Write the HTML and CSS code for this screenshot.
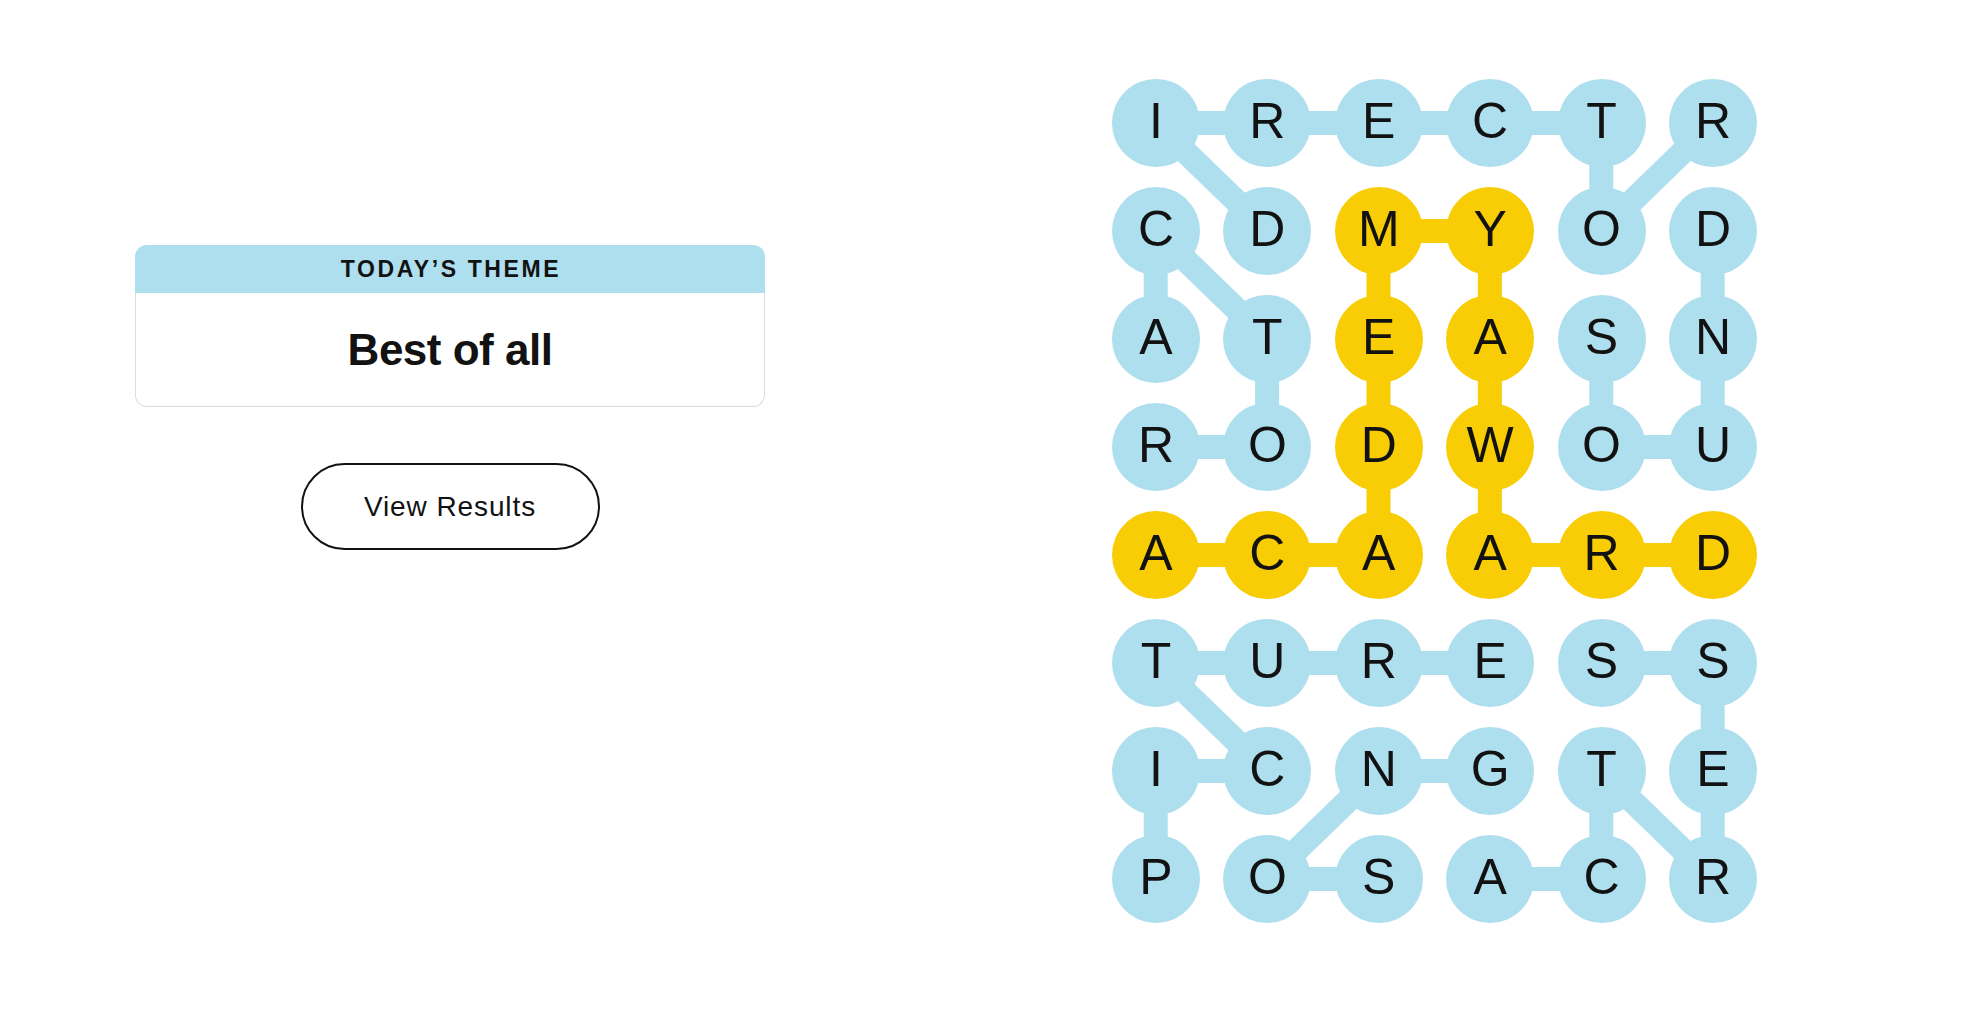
FILE: index.html
```html
<!DOCTYPE html>
<html lang="en">
<head>
<meta charset="utf-8">
<title>Strands</title>
<link rel="stylesheet" href="styles.css">
</head>
<body>
<main class="page">
  <section class="left">
    <div class="card">
      <div class="card-header">TODAY’S THEME</div>
      <div class="card-body">Best of all</div>
    </div>
    <button class="results-btn" type="button">View Results</button>
  </section>
  <section class="board">
    <svg class="links" viewBox="0 0 668.4 864" width="668.4" height="864" aria-hidden="true">
      <g class="blue">
        <line x1="55.7" y1="54" x2="167.1" y2="54"/>
        <line x1="167.1" y1="54" x2="278.5" y2="54"/>
        <line x1="278.5" y1="54" x2="389.9" y2="54"/>
        <line x1="389.9" y1="54" x2="501.3" y2="54"/>
        <line x1="55.7" y1="378" x2="167.1" y2="378"/>
        <line x1="501.3" y1="378" x2="612.7" y2="378"/>
        <line x1="55.7" y1="594" x2="167.1" y2="594"/>
        <line x1="167.1" y1="594" x2="278.5" y2="594"/>
        <line x1="278.5" y1="594" x2="389.9" y2="594"/>
        <line x1="501.3" y1="594" x2="612.7" y2="594"/>
        <line x1="55.7" y1="702" x2="167.1" y2="702"/>
        <line x1="278.5" y1="702" x2="389.9" y2="702"/>
        <line x1="167.1" y1="810" x2="278.5" y2="810"/>
        <line x1="389.9" y1="810" x2="501.3" y2="810"/>
        <line x1="55.7" y1="162" x2="55.7" y2="270"/>
        <line x1="167.1" y1="270" x2="167.1" y2="378"/>
        <line x1="501.3" y1="54" x2="501.3" y2="162"/>
        <line x1="501.3" y1="270" x2="501.3" y2="378"/>
        <line x1="612.7" y1="162" x2="612.7" y2="270"/>
        <line x1="612.7" y1="270" x2="612.7" y2="378"/>
        <line x1="55.7" y1="702" x2="55.7" y2="810"/>
        <line x1="612.7" y1="594" x2="612.7" y2="702"/>
        <line x1="612.7" y1="702" x2="612.7" y2="810"/>
        <line x1="501.3" y1="702" x2="501.3" y2="810"/>
        <line x1="55.7" y1="54" x2="167.1" y2="162"/>
        <line x1="55.7" y1="162" x2="167.1" y2="270"/>
        <line x1="501.3" y1="162" x2="612.7" y2="54"/>
        <line x1="55.7" y1="594" x2="167.1" y2="702"/>
        <line x1="278.5" y1="702" x2="167.1" y2="810"/>
        <line x1="501.3" y1="702" x2="612.7" y2="810"/>
      </g>
      <g class="yellow">
        <line x1="278.5" y1="162" x2="389.9" y2="162"/>
        <line x1="55.7" y1="486" x2="167.1" y2="486"/>
        <line x1="167.1" y1="486" x2="278.5" y2="486"/>
        <line x1="389.9" y1="486" x2="501.3" y2="486"/>
        <line x1="501.3" y1="486" x2="612.7" y2="486"/>
        <line x1="278.5" y1="162" x2="278.5" y2="270"/>
        <line x1="278.5" y1="270" x2="278.5" y2="378"/>
        <line x1="278.5" y1="378" x2="278.5" y2="486"/>
        <line x1="389.9" y1="162" x2="389.9" y2="270"/>
        <line x1="389.9" y1="270" x2="389.9" y2="378"/>
        <line x1="389.9" y1="378" x2="389.9" y2="486"/>
      </g>
    </svg>
    <div class="cell">I</div><div class="cell">R</div><div class="cell">E</div><div class="cell">C</div><div class="cell">T</div><div class="cell">R</div>
    <div class="cell">C</div><div class="cell">D</div><div class="cell gold">M</div><div class="cell gold">Y</div><div class="cell">O</div><div class="cell">D</div>
    <div class="cell">A</div><div class="cell">T</div><div class="cell gold">E</div><div class="cell gold">A</div><div class="cell">S</div><div class="cell">N</div>
    <div class="cell">R</div><div class="cell">O</div><div class="cell gold">D</div><div class="cell gold">W</div><div class="cell">O</div><div class="cell">U</div>
    <div class="cell gold">A</div><div class="cell gold">C</div><div class="cell gold">A</div><div class="cell gold">A</div><div class="cell gold">R</div><div class="cell gold">D</div>
    <div class="cell">T</div><div class="cell">U</div><div class="cell">R</div><div class="cell">E</div><div class="cell">S</div><div class="cell">S</div>
    <div class="cell">I</div><div class="cell">C</div><div class="cell">N</div><div class="cell">G</div><div class="cell">T</div><div class="cell">E</div>
    <div class="cell">P</div><div class="cell">O</div><div class="cell">S</div><div class="cell">A</div><div class="cell">C</div><div class="cell">R</div>
  </section>
</main>
</body>
</html>
```

FILE: styles.css
```css
* { box-sizing: border-box; }

html, body {
  margin: 0;
  padding: 0;
  background: #ffffff;
}

body {
  font-family: "Liberation Sans", Arial, sans-serif;
  color: #121212;
}

.page {
  display: flex;
  align-items: flex-start;
  padding: 69px 0 0 135px;
}

.left {
  width: 630px;
  margin-top: 176px;
  display: flex;
  flex-direction: column;
  align-items: center;
}

.card {
  width: 630px;
  height: 162px;
  border: 1px solid #dcdcdc;
  border-top: 0;
  border-radius: 12px;
  display: flex;
  flex-direction: column;
}

.card-header {
  height: 48px;
  margin: 0 -1px;
  background: #aedfee;
  border-radius: 12px 12px 0 0;
  display: flex;
  align-items: center;
  justify-content: center;
  font-size: 23px;
  font-weight: 700;
  letter-spacing: 2.6px;
  padding-left: 2px;
  color: #121212;
}

.card-body {
  flex: 1;
  display: flex;
  align-items: center;
  justify-content: center;
  font-size: 44px;
  font-weight: 700;
  letter-spacing: -0.5px;
  color: #121212;
}

.results-btn {
  margin-top: 56px;
  width: 299px;
  height: 87px;
  border: 2px solid #121212;
  border-radius: 44px;
  background: #ffffff;
  font-family: "Liberation Sans", Arial, sans-serif;
  font-size: 28px;
  color: #121212;
  letter-spacing: 0.9px;
  padding: 0;
}

.board {
  position: relative;
  margin-left: 335.3px;
  display: grid;
  grid-template-columns: repeat(6, 111.4px);
  grid-template-rows: repeat(8, 108px);
  place-items: center;
}

.links {
  position: absolute;
  left: 0;
  top: 0;
  z-index: 0;
}

.links line {
  stroke-width: 24;
  stroke-linecap: butt;
}

.links .blue line { stroke: #aedfee; }
.links .yellow line { stroke: #f8cd05; }

.cell {
  position: relative;
  z-index: 1;
  width: 88px;
  height: 88px;
  border-radius: 50%;
  background: #aedfee;
  display: flex;
  align-items: center;
  justify-content: center;
  font-size: 50px;
  line-height: 1;
  padding-bottom: 4px;
  color: #121212;
}

.cell.gold { background: #f8cd05; }
```
